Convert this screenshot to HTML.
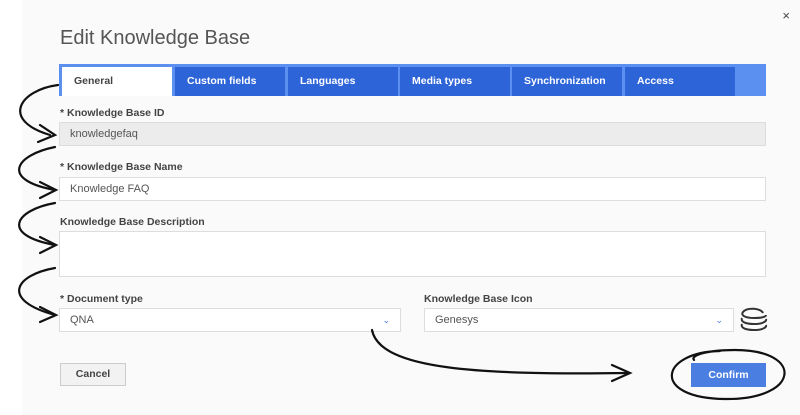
<!DOCTYPE html>
<html><head><style>
body{margin:0;width:800px;height:415px;background:#fff;font-family:"Liberation Sans",sans-serif;position:relative;overflow:hidden}
.modal{position:absolute;left:22px;top:0;width:778px;height:415px;background:#fafafa}
.a{position:absolute}
h1{position:absolute;left:60px;top:27px;margin:0;font-weight:normal;font-size:20px;color:#555}
.lbl{position:absolute;font-size:10.5px;font-weight:bold;color:#444}
.inp{position:absolute;box-sizing:border-box;border:1px solid #ddd;background:#fff;font-size:11px;color:#555;padding-left:10px;line-height:22px}
.tab{position:absolute;top:67px;height:29px;background:#2d64d8;color:#fff;font-size:10.5px;font-weight:bold;line-height:29px;padding-left:12px;box-sizing:border-box}
</style></head><body>
<div class="modal"></div>
<div class="a" style="right:10px;top:8px;font-size:13px;color:#444">×</div>
<h1>Edit Knowledge Base</h1>
<div class="a" style="left:59px;top:64px;width:707px;height:32px;background:#5b8ff0"></div>
<div class="tab" style="left:62px;width:110px;background:#fff;color:#444">General</div>
<div class="tab" style="left:175px;width:110px">Custom fields</div>
<div class="tab" style="left:288px;width:110px">Languages</div>
<div class="tab" style="left:400px;width:110px">Media types</div>
<div class="tab" style="left:512px;width:110px">Synchronization</div>
<div class="tab" style="left:625px;width:110px">Access</div>
<div class="lbl" style="left:60px;top:107px">* Knowledge Base ID</div>
<div class="inp" style="left:59px;top:122px;width:707px;height:24px;background:#ececec">knowledgefaq</div>
<div class="lbl" style="left:60px;top:161px">* Knowledge Base Name</div>
<div class="inp" style="left:59px;top:177px;width:707px;height:24px">Knowledge FAQ</div>
<div class="lbl" style="left:60px;top:216px">Knowledge Base Description</div>
<div class="inp" style="left:59px;top:231px;width:707px;height:46px"></div>
<div class="lbl" style="left:60px;top:293px">* Document type</div>
<div class="inp" style="left:59px;top:308px;width:342px;height:24px">QNA<span style="position:absolute;right:10px;color:#4a7ee0;font-size:9px">⌄</span></div>
<div class="lbl" style="left:424px;top:293px">Knowledge Base Icon</div>
<div class="inp" style="left:424px;top:308px;width:310px;height:24px">Genesys<span style="position:absolute;right:10px;color:#4a7ee0;font-size:9px">⌄</span></div>
<svg class="a" style="left:739px;top:306px" width="30" height="28" viewBox="0 0 30 28"><g fill="none" stroke="#333" stroke-width="2"><path d="M24 7 C22 2 8 1 4 6 C1 10 8 12 15 12 C22 12 27 11 27 9"/><path d="M3 12 C1 17 10 18 15 18 C22 18 28 16 27 13"/><path d="M3 18 C1 23 10 24 15 24 C22 24 28 22 27 19"/></g></svg>
<div class="a" style="left:60px;top:363px;width:66px;height:23px;border:1px solid #ccc;box-sizing:border-box;background:#f2f2f2;font-size:10.5px;font-weight:bold;color:#444;text-align:center;line-height:21px">Cancel</div>
<div class="a" style="left:691px;top:363px;width:75px;height:24px;background:#4a7ee0;font-size:10.5px;font-weight:bold;color:#fff;text-align:center;line-height:24px">Confirm</div>
<svg class="a" style="left:0;top:0" width="800" height="415"><g fill="none" stroke="#111" stroke-width="2.2" stroke-linecap="round">
<path d="M58 85 C20 90 0 120 50 135"/><path d="M40 125 L55 135 L38 142"/>
<path d="M55 147 C15 155 0 180 55 190"/><path d="M40 182 L56 190 L40 198"/>
<path d="M55 203 C15 210 0 235 55 245"/><path d="M40 237 L56 245 L40 253"/>
<path d="M55 268 C15 275 0 300 55 315"/><path d="M40 307 L56 315 L40 322"/>
<path d="M372 330 C380 370 480 375 628 373"/><path d="M612 365 L630 373 L612 381"/>
<path d="M720 351 C660 352 650 398 725 399 C800 400 805 350 735 350 C705 350 690 356 694 360"/>
</g></svg>
</body></html>
